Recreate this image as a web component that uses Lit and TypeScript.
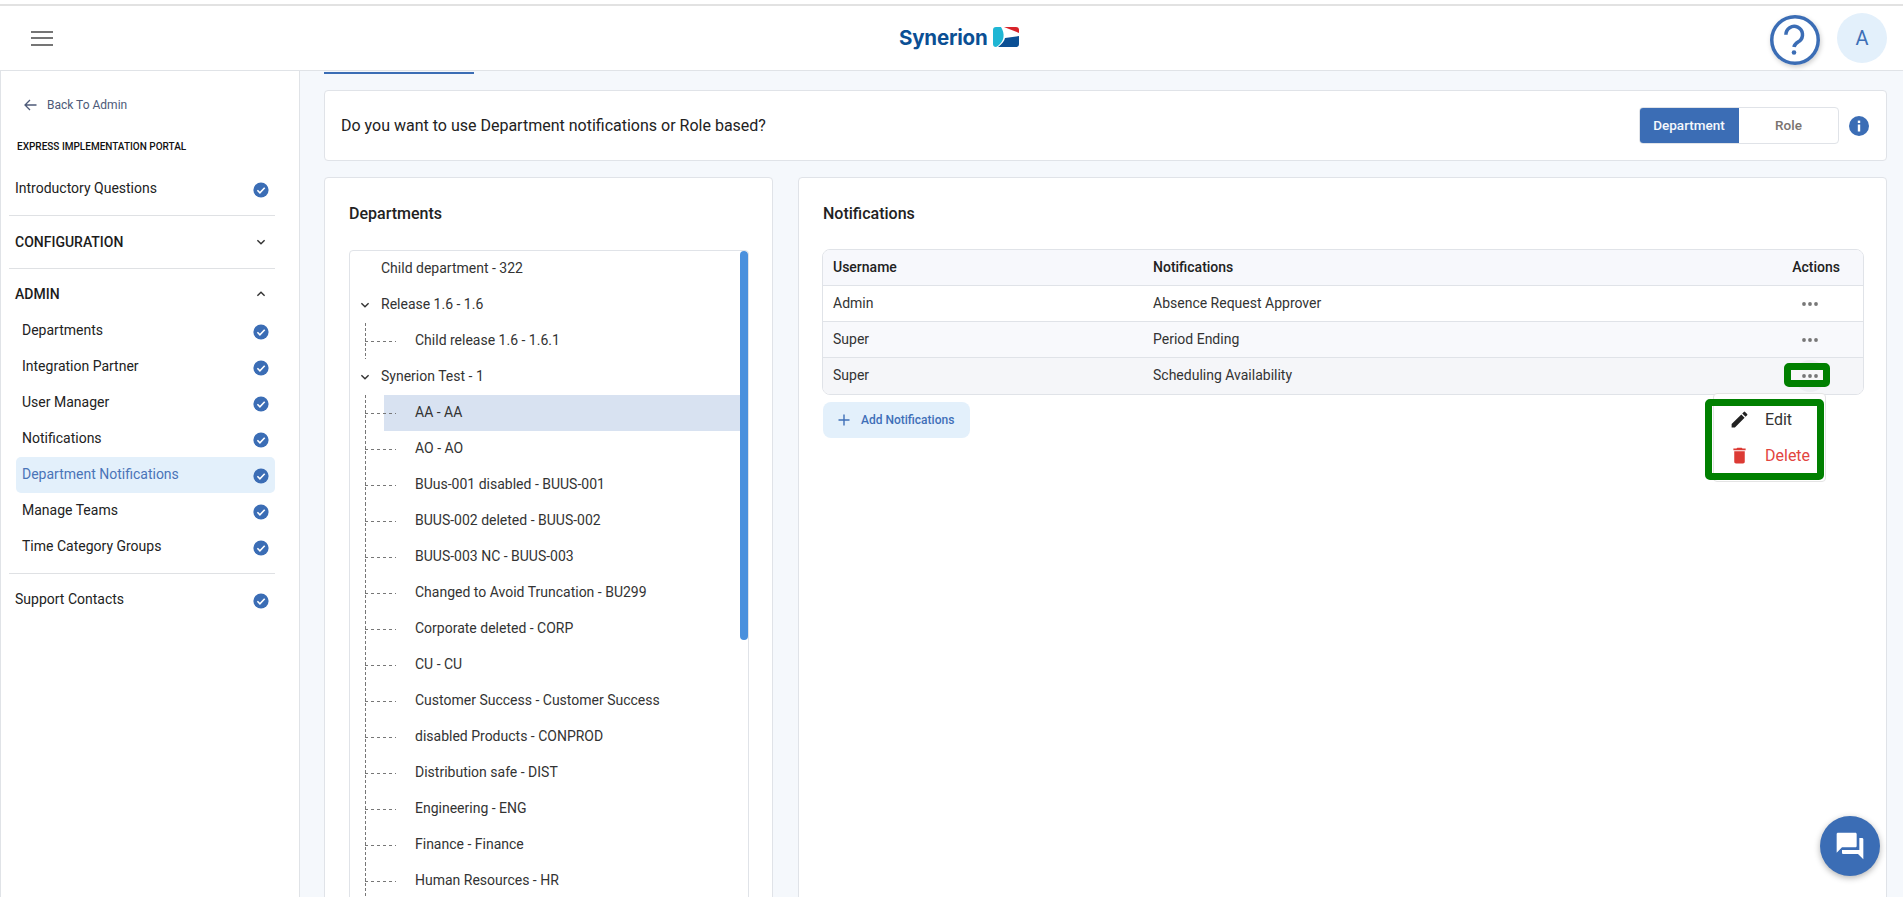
import { LitElement, html, css } from "lit";
import { customElement } from "lit/decorators.js";

const check = html`<svg class="chk" viewBox="0 0 16 16"><circle cx="8" cy="8" r="7.6" fill="#3b6db5"/><path d="M4.4 8.3l2.5 2.5 4.8-5" fill="none" stroke="#fff" stroke-width="1.6"/></svg>`;
const chevDown = html`<svg class="chev" viewBox="0 0 10 10"><path d="M2 3.6l3 2.9 3-2.9" fill="none" stroke="#333" stroke-width="1.2"/></svg>`;
const chevUp = html`<svg class="chev" viewBox="0 0 10 10"><path d="M2 6.4l3-2.9 3 2.9" fill="none" stroke="#333" stroke-width="1.2"/></svg>`;
const dots = html`<svg class="dots" viewBox="0 0 16 4"><circle cx="2" cy="2" r="1.9"/><circle cx="8" cy="2" r="1.9"/><circle cx="14" cy="2" r="1.9"/></svg>`;

const flat = ["AO - AO", "BUus-001 disabled - BUUS-001", "BUUS-002 deleted - BUUS-002", "BUUS-003 NC - BUUS-003", "Changed to Avoid Truncation - BU299", "Corporate deleted - CORP", "CU - CU", "Customer Success - Customer Success", "disabled Products - CONPROD", "Distribution safe - DIST", "Engineering - ENG", "Finance - Finance", "Human Resources - HR"];

@customElement("app-root")
export class AppRoot extends LitElement {
  static styles = css`
    :host { display: block; height: 897px; overflow: hidden; position: relative; background: #fff; font-family: Roboto, "Liberation Sans", sans-serif; color: #222; font-size: 14px; }
    * { box-sizing: border-box; }
    .strip { height: 6px; border-bottom: 2px solid #e2e2e2; background: #fff; }
    header { height: 65px; border-bottom: 1px solid #e0e3e7; display: flex; align-items: center; padding: 0 16px 0 31px; position: relative; }
    .burger { width: 22px; height: 15px; display: flex; flex-direction: column; justify-content: space-between; }
    .burger i { display: block; height: 2px; background: #757575; }
    .logo { position: absolute; left: 899px; top: 19px; display: flex; align-items: center; gap: 5px; }
    .logo b { font-family: Inter, sans-serif; font-weight: 700; font-size: 20.5px; letter-spacing: -0.2px; color: #0b4f94; line-height: 26px; }
    .logo svg { width: 26px; height: 20px; margin-top: -2px; }
    .right { margin-left: auto; display: flex; align-items: center; gap: 17px; }
    .help { width: 50px; height: 50px; border-radius: 50%; box-shadow: 1px 2px 5px rgba(0,0,0,.2); background: #fff; margin-top: 4px; }
    .help svg { display: block; width: 50px; height: 50px; }
    .avatar { width: 50px; height: 50px; border-radius: 50%; background: #e3f0fb; color: #3d6fb6; display: flex; align-items: center; justify-content: center; font-size: 20px; }
    .body { display: flex; height: 826px; }
    aside { width: 300px; flex: none; border-left: 1px solid #e0e3e7; border-right: 1px solid #e0e3e7; background: #fff; padding: 25px 0 0 8px; }
    .back { display: flex; align-items: center; gap: 10px; font-size: 12px; color: #4d5a78; height: 18px; padding-left: 15px; }
    .back svg { width: 13px; height: 12px; }
    .portal { font-size: 10px; font-weight: 500; color: #111; margin: 26px 0 0 8px; line-height: 14px; }
    .nav { width: 266px; }
    .item { display: flex; align-items: center; justify-content: space-between; height: 36px; padding-left: 6px; padding-right: 6px; color: #222; }
    .item span { margin-top: -3px; }
    .item.top { margin-top: 18px; height: 34px; }
    .item.child { padding-left: 13px; }
    .item.active { background: #e3f0fb; color: #4a74b8; border-radius: 5px; margin-left: 7px; padding-left: 6px; }
    .item.last { height: 52px; }
    .chk { width: 16px; height: 16px; flex: none; margin-top: 2px; }
    .hr { height: 1px; background: #dfe1e4; }
    .hr.first { margin-top: 9px; }
    .hr.end { margin-top: 8px; }
    .sec { display: flex; align-items: center; justify-content: space-between; height: 52px; padding: 0 8px 0 6px; font-weight: 500; font-size: 14px; color: #1c1c1c; }
    .sec.open { height: 44px; padding-top: 6px; }
    .chev { width: 12px; height: 12px; flex: none; }
    main { flex: 1; min-width: 0; background: #f5f8fc; padding: 1px 16px 0 24px; overflow: hidden; }
    .tab { width: 150px; height: 2px; background: #3b6db5; }
    .card { background: #fff; border: 1px solid #e0e3e8; border-radius: 4px; }
    .q { margin-top: 16px; height: 71px; display: flex; align-items: center; padding: 0 17px 0 16px; font-size: 16px; color: #222; }
    .q p { margin: 0 auto 0 0; }
    .toggle { display: flex; width: 200px; height: 37px; border: 1px solid #e0e3e8; border-radius: 4px; overflow: hidden; font-weight: 500; font-size: 13.5px; }
    .toggle div { display: flex; align-items: center; justify-content: center; padding-bottom: 2px; }
    .toggle .on { width: 100px; background: #3b6db5; color: #f5f8fc; margin: -1px 0 -1px -1px; }
    .toggle .off { flex: 1; color: #7a7370; }
    .info { width: 20px; height: 20px; margin-left: 10px; }
    .cols { display: flex; gap: 25px; margin-top: 16px; height: 760px; }
    .dept { width: 449px; flex: none; padding: 0 23px 0 24px; }
    .note { flex: 1; min-width: 0; padding: 0 22px 0 24px; position: relative; }
    h3 { margin: 0; font-size: 16px; font-weight: 500; line-height: 20px; padding-top: 26px; height: 72px; color: #222; }
    .note h3 { height: 71px; }
    .tree { border: 1px solid #e0e3e8; border-radius: 4px; position: relative; height: 680px; color: #333; overflow: hidden; }
    .row { height: 36px; display: flex; align-items: center; padding-left: 31px; position: relative; }
    .row.sub { padding-left: 65px; }
    .row.sel::before { content: ""; position: absolute; left: 34px; right: 8px; top: 0; bottom: 0; background: #d8e2f1; }
    .row span { position: relative; margin-top: -2px; }
    .row .chev { position: absolute; left: 9px; top: 12px; }
    .vl { position: absolute; left: 15px; top: 0; bottom: 0; width: 1px; background: repeating-linear-gradient(to bottom, #777 0 3px, transparent 3px 5px); }
    .hl { position: absolute; left: 15px; width: 31px; top: 18px; height: 1px; background: repeating-linear-gradient(to right, #777 0 3px, transparent 3px 6px); }
    .thumb { position: absolute; right: 0; top: 0; width: 8px; height: 389px; background: #4a90dd; border-radius: 4px; }
    .table { border: 1px solid #e0e3e8; border-radius: 8px; overflow: hidden; margin-left: -1px; }
    .tr { display: grid; grid-template-columns: 320px 1fr 80px; height: 36px; align-items: center; padding-left: 10px; border-top: 1px solid #e0e3e8; color: #333; }
    .tr > div { padding-bottom: 2px; }
    .tr > .dc { padding-bottom: 0; height: 4px; }
    .tr:first-child { border-top: 0; height: 35px; background: #f7f8fc; font-weight: 500; color: #222; }
    .tr.alt { background: #f8f9fc; }
    .tr.hover { background: #f5f6f9; height: 37px; }
    .act { text-align: right; padding-right: 23px; }
    .dots { width: 16px; height: 4px; fill: #777; display: block; margin-left: auto; margin-right: 45px; }
    .add { margin-top: 7px; width: 147px; height: 36px; border-radius: 8px; background: #e3f0fb; color: #3f6fb8; display: flex; align-items: center; font-size: 12px; font-weight: 500; padding-left: 15px; gap: 11px; }
    .add svg { width: 12px; height: 12px; }
    .halo { position: absolute; left: 1794px; top: 360px; width: 32px; height: 32px; border-radius: 50%; background: #eceef1; }
    .menu { position: absolute; left: 1713px; top: 393px; width: 113px; height: 89px; background: #fff; border: 1px solid #e4e4e4; border-radius: 4px; padding-top: 7px; }
    .mi { display: flex; align-items: center; height: 36px; padding-left: 15px; gap: 15px; font-size: 16px; color: #333; }
    .mi svg { width: 21px; height: 21px; flex: none; }
    .mi.del { color: #e2453f; }
    .mark { position: absolute; border: 7px solid #008000; border-radius: 5px; }
    .mark.a { left: 1784px; top: 363px; width: 46px; height: 24px; background: #f7f7f8; display: flex; align-items: center; }
    .mark.a .dots { margin: 2px 0 0 11px; }
    .mark.b { left: 1705px; top: 399px; width: 119px; height: 81px; }
    .fab { position: absolute; left: 1820px; top: 816px; width: 60px; height: 60px; border-radius: 50%; background: #3b6db5; box-shadow: 0 2px 6px rgba(0,0,0,.3); display: flex; align-items: center; justify-content: center; }
    .fab svg { width: 32px; height: 32px; fill: #fff; }
  `;

  render() {
    return html`
      <div class="strip"></div>
      <header>
        <div class="burger"><i></i><i></i><i></i></div>
        <div class="logo"><b>Synerion</b>
          <svg viewBox="0 0 26 20"><path d="M3 0H8C10 3 11 7 10.5 10 10 14 7 18 3 20A3 3 0 0 1 0 17V3A3 3 0 0 1 3 0Z" fill="#1fb6d4"/><path d="M11 0H23a3 3 0 0 1 3 3V6Z" fill="#d8232a"/><path d="M26 9V17a3 3 0 0 1-3 3H5C9 17 11.5 14 12 11Z" fill="#0b4f94"/></svg>
        </div>
        <div class="right">
          <div class="help"><svg viewBox="0 0 50 50"><circle cx="25" cy="25" r="23.25" fill="none" stroke="#3b6db5" stroke-width="3.5"/><path d="M15.9 19.8a8.3 8.3 0 1 1 13.5 6.3C26.5 28 24.3 29 24 32" fill="none" stroke="#3b6db5" stroke-width="3.5"/><circle cx="24" cy="37.5" r="2.3" fill="#3b6db5"/></svg></div>
          <div class="avatar">A</div>
        </div>
      </header>
      <div class="body">
        <aside>
          <div class="back"><svg viewBox="0 0 13 12"><path d="M12.5 6H1.5M6 1L1 6l5 5" fill="none" stroke="#4d5a78" stroke-width="1.3"/></svg>Back To Admin</div>
          <div class="portal">EXPRESS IMPLEMENTATION PORTAL</div>
          <div class="nav">
            <div class="item top"><span>Introductory Questions</span>${check}</div>
            <div class="hr first"></div>
            <div class="sec">CONFIGURATION ${chevDown}</div>
            <div class="hr"></div>
            <div class="sec open">ADMIN ${chevUp}</div>
            ${["Departments", "Integration Partner", "User Manager", "Notifications"].map((t) => html`<div class="item child"><span>${t}</span>${check}</div>`)}
            <div class="item active child"><span>Department Notifications</span>${check}</div>
            ${["Manage Teams", "Time Category Groups"].map((t) => html`<div class="item child"><span>${t}</span>${check}</div>`)}
            <div class="hr end"></div>
            <div class="item last"><span>Support Contacts</span>${check}</div>
          </div>
        </aside>
        <main>
          <div class="tab"></div>
          <div class="card q">
            <p>Do you want to use Department notifications or Role based?</p>
            <div class="toggle"><div class="on">Department</div><div class="off">Role</div></div>
            <svg class="info" viewBox="0 0 20 20"><circle cx="10" cy="10" r="10" fill="#3b6db5"/><rect x="8.8" y="8.5" width="2.4" height="7" fill="#fff"/><rect x="8.8" y="4.6" width="2.4" height="2.4" fill="#fff"/></svg>
          </div>
          <div class="cols">
            <div class="card dept">
              <h3>Departments</h3>
              <div class="tree">
                <div class="row"><span>Child department - 322</span></div>
                <div class="row">${chevDown}<span>Release 1.6 - 1.6</span></div>
                <div class="row sub"><i class="vl"></i><i class="hl"></i><span>Child release 1.6 - 1.6.1</span></div>
                <div class="row">${chevDown}<span>Synerion Test - 1</span></div>
                <div class="row sub sel"><i class="vl"></i><i class="hl"></i><span>AA - AA</span></div>
                ${flat.map((t) => html`<div class="row sub"><i class="vl"></i><i class="hl"></i><span>${t}</span></div>`)}
                <div class="thumb"></div>
              </div>
            </div>
            <div class="card note">
              <h3>Notifications</h3>
              <div class="table">
                <div class="tr"><div>Username</div><div>Notifications</div><div class="act">Actions</div></div>
                <div class="tr"><div>Admin</div><div>Absence Request Approver</div><div class="dc">${dots}</div></div>
                <div class="tr alt"><div>Super</div><div>Period Ending</div><div class="dc">${dots}</div></div>
                <div class="tr hover"><div>Super</div><div>Scheduling Availability</div><div class="dc"></div></div>
              </div>
              <div class="add"><svg viewBox="0 0 12 12"><path d="M6 .5v11M.5 6h11" stroke="#3f6fb8" stroke-width="1.4" fill="none"/></svg>Add Notifications</div>
            </div>
          </div>
        </main>
      </div>
      <div class="halo"></div>
      <div class="menu">
        <div class="mi"><svg viewBox="0 0 24 24" fill="#222"><path d="M3 17.25V21h3.75L17.81 9.94l-3.75-3.75L3 17.25zM20.71 7.04a1 1 0 0 0 0-1.41l-2.34-2.34a1 1 0 0 0-1.41 0l-1.83 1.83 3.75 3.75 1.83-1.83z"/></svg>Edit</div>
        <div class="mi del"><svg viewBox="0 0 24 24" fill="#dc3a34"><path d="M6 19c0 1.1.9 2 2 2h8c1.1 0 2-.9 2-2V7H6v12zM19 4h-3.5l-1-1h-5l-1 1H5v2h14V4z"/></svg>Delete</div>
      </div>
      <div class="mark a">${dots}</div>
      <div class="mark b"></div>
      <div class="fab"><svg viewBox="0 0 24 24"><path d="M21 6h-2v9H6v2c0 .55.45 1 1 1h11l4 4V7c0-.55-.45-1-1-1zm-4 6V3c0-.55-.45-1-1-1H3c-.55 0-1 .45-1 1v14l4-4h10c.55 0 1-.45 1-1z"/></svg></div>
    `;
  }
}
